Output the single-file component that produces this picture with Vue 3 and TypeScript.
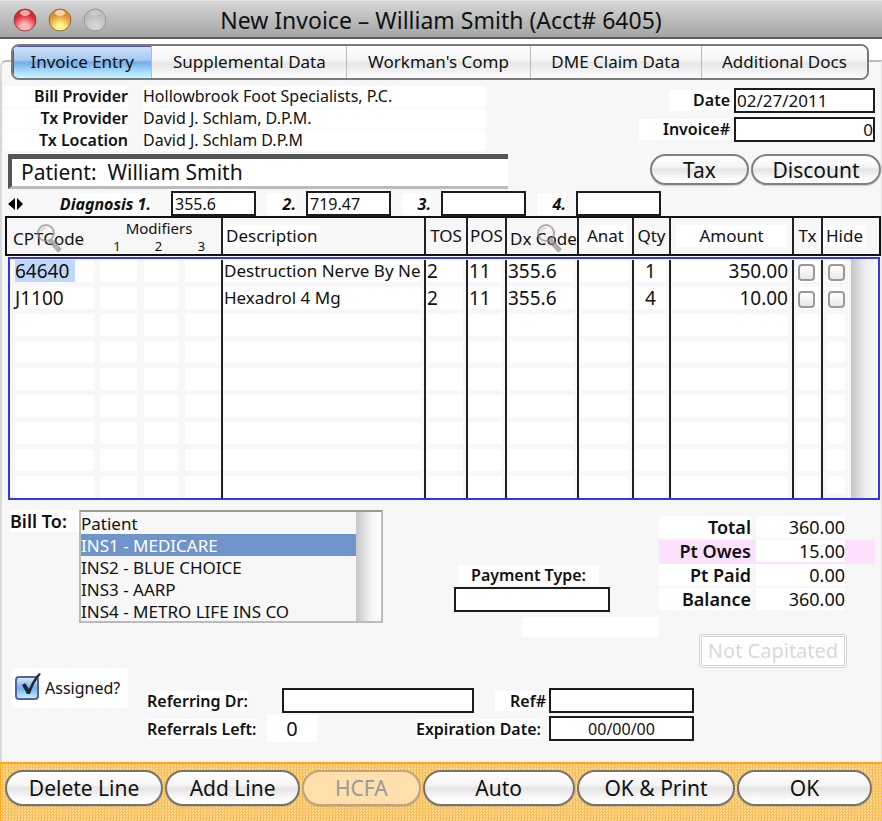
<script setup lang="ts">
import { ref } from 'vue'

interface Line {
  code: string
  desc: string
  tos: string
  pos: string
  dx: string
  anat: string
  qty: string
  amount: string
  tx: boolean
  hide: boolean
}

const tabs = ['Invoice Entry', 'Supplemental Data', "Workman's Comp", 'DME Claim Data', 'Additional Docs']
const activeTab = ref(0)

const providers = [
  { label: 'Bill Provider', value: 'Hollowbrook Foot Specialists, P.C.' },
  { label: 'Tx Provider', value: 'David J. Schlam, D.P.M.' },
  { label: 'Tx Location', value: 'David J. Schlam D.P.M' },
]

const date = ref('02/27/2011')
const invoiceNo = ref('0')
const diagnoses = ref(['355.6', '719.47', '', ''])

const lines = ref<Line[]>([
  { code: '64640', desc: 'Destruction Nerve By Ne', tos: '2', pos: '11', dx: '355.6', anat: '', qty: '1', amount: '350.00', tx: false, hide: false },
  { code: 'J1100', desc: 'Hexadrol 4 Mg', tos: '2', pos: '11', dx: '355.6', anat: '', qty: '4', amount: '10.00', tx: false, hide: false },
])
const emptyRows = 7

const payers = ['Patient', 'INS1 - MEDICARE', 'INS2 - BLUE CHOICE', 'INS3 - AARP', 'INS4 - METRO LIFE INS CO']
const billTo = ref('INS1 - MEDICARE')
const paymentType = ref('')
const totals = [
  { label: 'Total', value: '360.00', owed: false },
  { label: 'Pt Owes', value: '15.00', owed: true },
  { label: 'Pt Paid', value: '0.00', owed: false },
  { label: 'Balance', value: '360.00', owed: false },
]
const assigned = ref(true)
const referringDr = ref('')
const refNo = ref('')
const expiration = ref('00/00/00')
</script>

<template>
  <main class="window">
    <header class="titlebar">
      <div class="lights">
        <svg v-for="c in ['red', 'amber', 'grey']" :key="c" :class="['light', c]" viewBox="0 0 24 24" aria-hidden="true">
          <defs>
            <radialGradient :id="'orb-' + c" cx="0.5" cy="0.85" r="0.75">
              <stop class="inner" offset="0" />
              <stop class="inner" offset="0.25" />
              <stop class="outer" offset="0.8" />
            </radialGradient>
          </defs>
          <circle class="rim" cx="12" cy="12" r="11" :fill="`url(#orb-${c})`" />
          <ellipse class="shine" cx="12" cy="5" rx="5" ry="3" />
        </svg>
      </div>
      <h1>New Invoice – William Smith (Acct# 6405)</h1>
    </header>

    <nav class="tabs">
      <button v-for="(t, i) in tabs" :key="t" type="button" :class="{ active: i === activeTab }" @click="activeTab = i">{{ t }}</button>
    </nav>

    <div class="pane">
      <section class="top">
        <dl class="providers">
          <template v-for="p in providers" :key="p.label">
            <dt>{{ p.label }}</dt>
            <dd>{{ p.value }}</dd>
          </template>
        </dl>
        <div class="ids">
          <label for="date">Date</label>
          <input id="date" v-model="date" class="field" />
          <label for="inv">Invoice#</label>
          <input id="inv" v-model="invoiceNo" class="field right" />
        </div>
      </section>

      <section class="patient-row">
        <div class="patient">Patient:&nbsp; William Smith</div>
        <div class="pair">
          <button type="button" class="pill tax">Tax</button>
          <button type="button" class="pill disc">Discount</button>
        </div>
      </section>

      <section class="diagnosis">
        <svg class="arrows" viewBox="0 0 16 14" aria-hidden="true"><path d="M7 1v12L0 7zM9 1v12l6-6z" /></svg>
        <template v-for="(_, i) in diagnoses" :key="i">
          <label :for="'dx' + i" :class="{ first: i === 0 }"><span>{{ i === 0 ? 'Diagnosis 1.' : i + 1 + '.' }}</span></label>
          <input :id="'dx' + i" v-model="diagnoses[i]" class="field" />
        </template>
      </section>

      <table class="lines">
        <thead>
          <tr>
            <th class="code low">
              CPTCode
              <svg class="lens" viewBox="0 0 28 30" aria-hidden="true"><path class="handle" d="M15 17l10 11" /><circle cx="11" cy="10" r="8" /><path class="glint" d="M6 9q1-4 5-4" /></svg>
            </th>
            <th class="mods rule">
              <span class="title">Modifiers</span>
              <span class="nums"><i>1</i><i>2</i><i>3</i></span>
            </th>
            <th class="rule left"><span class="chip">Description</span></th>
            <th class="rule">TOS</th>
            <th class="rule">POS</th>
            <th class="rule low dxh">
              Dx Code
              <svg class="lens" viewBox="0 0 28 30" aria-hidden="true"><path class="handle" d="M15 17l10 11" /><circle cx="11" cy="10" r="8" /><path class="glint" d="M6 9q1-4 5-4" /></svg>
            </th>
            <th class="rule"><span class="chip">Anat</span></th>
            <th class="rule">Qty</th>
            <th class="rule"><span class="chip amt">Amount</span></th>
            <th class="rule">Tx</th>
            <th class="left"><span class="chip">Hide</span></th>
          </tr>
        </thead>
        <tbody>
          <tr v-for="(l, i) in lines" :key="l.code">
            <td class="code num"><span :class="{ selected: i === 0 }">{{ l.code }}</span></td>
            <td class="mod"></td>
            <td class="mod"></td>
            <td class="mod rule"></td>
            <td class="desc rule">{{ l.desc }}</td>
            <td class="rule num">{{ l.tos }}</td>
            <td class="rule num">{{ l.pos }}</td>
            <td class="rule num">{{ l.dx }}</td>
            <td class="rule">{{ l.anat }}</td>
            <td class="rule center num">{{ l.qty }}</td>
            <td class="rule amount num">{{ l.amount }}</td>
            <td class="rule tick"><input v-model="l.tx" type="checkbox" aria-label="Tx" /></td>
            <td class="tick"><input v-model="l.hide" type="checkbox" aria-label="Hide" /></td>
          </tr>
          <tr v-for="n in emptyRows" :key="n">
            <td class="code"></td>
            <td class="mod"></td>
            <td class="mod"></td>
            <td class="mod rule"></td>
            <td class="desc rule"></td>
            <td v-for="k in 5" :key="k" class="rule"></td>
            <td class="rule amount"></td>
            <td class="rule tick"></td>
            <td class="tick"></td>
          </tr>
        </tbody>
      </table>

      <section class="middle">
        <div class="bill">
          <label for="billto">Bill To:</label>
          <div class="list">
            <select id="billto" v-model="billTo" size="5">
              <option v-for="p in payers" :key="p">{{ p }}</option>
            </select>
            <div class="track"></div>
          </div>
        </div>
        <div class="payment">
          <label for="ptype">Payment Type:</label>
          <input id="ptype" v-model="paymentType" class="field" />
          <div class="note"></div>
        </div>
        <div class="sums">
          <dl>
            <div v-for="t in totals" :key="t.label" :class="{ owed: t.owed }">
              <dt>{{ t.label }}</dt>
              <dd>{{ t.value }}</dd>
            </div>
          </dl>
          <button type="button" class="capitated" disabled>Not Capitated</button>
        </div>
      </section>

      <section class="referral">
        <label class="assigned">
          <span class="box">
            <input v-model="assigned" type="checkbox" />
            <svg v-if="assigned" viewBox="0 0 26 28" aria-hidden="true"><path d="M6 13l3-2 4 6Q17 7 23 1l2 1Q18 10 14 22h-3z" /></svg>
          </span>
          <span>Assigned?</span>
        </label>
        <div class="refs">
          <label for="rdr"><span>Referring Dr:</span></label>
          <input id="rdr" v-model="referringDr" class="field wide" />
          <label for="rno" class="end"><span class="rno">Ref#</span></label>
          <input id="rno" v-model="refNo" class="field" />
          <div class="lbl"><span>Referrals Left:</span></div>
          <output>0</output>
          <label for="exp" class="end exp"><span>Expiration Date:</span></label>
          <input id="exp" v-model="expiration" class="field mid" />
        </div>
      </section>
    </div>

    <footer>
      <button type="button" class="pill a">Delete Line</button>
      <button type="button" class="pill b">Add Line</button>
      <button type="button" class="pill c" disabled>HCFA</button>
      <button type="button" class="pill d">Auto</button>
      <button type="button" class="pill a">OK &amp; Print</button>
      <button type="button" class="pill b">OK</button>
    </footer>
  </main>
</template>

<style>
body {
  margin: 0;
}
</style>

<style scoped>
* {
  box-sizing: border-box;
}
.window {
  min-height: 100vh;
  display: flex;
  flex-direction: column;
  background: #fff;
  color: #111;
  font: 17px/22px "Noto Sans", "Open Sans", sans-serif;
}
button,
input,
select {
  font: inherit;
  color: inherit;
  margin: 0;
}
dl,
dt,
dd {
  margin: 0;
}
.titlebar {
  height: 39px;
  display: grid;
  grid-template-columns: 1fr auto 1fr;
  align-items: center;
  padding-top: 2px;
  background: linear-gradient(#d6d6d6, #a4a4a4);
  border-top: 1px solid #e4e4e4;
  border-bottom: 2px solid #5c5c5c;
}
h1 {
  margin: 0;
  font-size: 23px;
  line-height: 26px;
  font-weight: 400;
}
.lights {
  display: flex;
  gap: 11px;
  padding-left: 13px;
}
.light {
  width: 24px;
  height: 24px;
}
.red .rim { stroke: #8c4a4a; }
.red .inner { stop-color: #ffb4b4; }
.red .outer { stop-color: #da2730; }
.amber .rim { stroke: #96703a; }
.amber .inner { stop-color: #fff08a; }
.amber .outer { stop-color: #e09036; }
.grey .rim { stroke: #989898; }
.grey .inner { stop-color: #d4d4d4; }
.grey .outer { stop-color: #bcbcbc; }
.shine { fill: #fff; opacity: 0.6; }
.grey .shine { opacity: 0.2; }

.tabs {
  position: relative;
  z-index: 1;
  display: flex;
  height: 36px;
  margin: 5px 13px 0 11px;
  border: 2px solid #7a7a7a;
  border-radius: 8px;
  overflow: hidden;
}
.tabs button {
  flex: 1 1 auto;
  padding: 0;
  border: 0;
  border-right: 1px solid #bbb;
  background: linear-gradient(#fff, #f3f3f3 48%, #e6e6e6 50%, #fafafa);
}
.tabs button:nth-child(1) { flex: 139 1 0; }
.tabs button:nth-child(2) { flex: 195 1 0; }
.tabs button:nth-child(3) { flex: 183 1 0; }
.tabs button:nth-child(4) { flex: 171 1 0; }
.tabs button:nth-child(5) { flex: 166 1 0; border-right: 0; }
.tabs .active {
  background: linear-gradient(#d3e4f8, #a3c8f0 45%, #72abe8 50%, #a9dcfb 80%, #c6f6ff);
  box-shadow: inset 1px 1px 0 #4a55b5;
}

.pane {
  flex: 1;
  margin-top: -20px;
  padding-top: 24px;
  border-top: 2px solid #bbb;
  border-left: 2px solid #d8d8d8;
  border-right: 1px solid #e4e4e4;
  border-top-left-radius: 6px;
  background: #f7f7f7;
}
.top {
  display: flex;
  justify-content: space-between;
  padding: 0 6px 0 1px;
}
.providers {
  display: grid;
  grid-template-columns: 125px 343px;
  gap: 1px 15px;
  font-size: 16px;
  line-height: 21px;
}
.providers dt,
.providers dd {
  background: #fff;
}
.providers dt {
  font-weight: 600;
  text-align: right;
}
.ids {
  display: grid;
  grid-template-columns: auto 141px;
  align-content: start;
  align-items: center;
  justify-items: end;
  gap: 4px;
  padding-top: 2px;
  font-size: 16px;
}
.ids label {
  padding-left: 24px;
  background: #fff;
  font-weight: 600;
  line-height: 21px;
}
.field {
  width: 100%;
  height: 25px;
  min-width: 0;
  padding: 0 2px;
  border: 2px solid #1c1c1c;
  border-radius: 0;
  outline: 0;
  background: #fff;
  font-size: 16px;
  line-height: 21px;
}
.ids .field { font-size: 17px; padding: 0 1px; }
.ids .right { text-align: right; padding: 0; }
.mid { text-align: center; }

.patient-row {
  display: flex;
  justify-content: space-between;
  align-items: flex-start;
  margin-top: 3px;
  padding-left: 6px;
}
.patient {
  flex: 0 1 500px;
  height: 35px;
  padding-left: 9px;
  border-top: 5px solid #555;
  border-left: 4px solid #555;
  border-bottom: 3px solid #bbb;
  background: #fff;
  font-size: 21px;
  line-height: 26px;
}
.pill {
  height: 31px;
  padding: 0;
  border: 2px solid #808080;
  border-radius: 18px;
  background: linear-gradient(#fff, #f6f6f6 40%, #e4e4e4 50%, #fff 90%);
  box-shadow: 0 1px 1px #9997;
  font-size: 21px;
  line-height: 24px;
}
.pair {
  display: flex;
  gap: 2px;
}
.tax { width: 99px; }
.disc { width: 130px; }

.diagnosis {
  display: grid;
  grid-template-columns: 16px 147px repeat(3, 85px 50px) 85px;
  margin-top: 2px;
  padding-left: 6px;
  align-items: center;
  font-size: 16px;
}
.arrows {
  width: 16px;
  height: 14px;
}
.diagnosis label {
  padding-right: 10px;
  text-align: right;
  font-style: italic;
  font-weight: 700;
}
.diagnosis .first { padding-right: 20px; }
.diagnosis span {
  display: inline-block;
  padding-left: 16px;
  background: #fff;
}
.diagnosis .first span { padding-left: 0; }

.lines {
  display: grid;
  grid-template-columns: 92px 44px 41px 41px minmax(0, 1fr) 42px 39px 72px 55px 37px 123px 29px 58px;
  margin: 0 0 0 3px;
}
thead,
tbody,
tr {
  display: grid;
  grid-column: 1 / -1;
  grid-template-columns: subgrid;
}
thead {
  border: 2px solid #111;
}
th {
  height: 36px;
  padding: 0;
  font-weight: 400;
  line-height: 36px;
  white-space: nowrap;
}
.rule {
  border-right: 2px solid #222;
}
.left { text-align: left; }
th.low {
  position: relative;
  line-height: 42px;
  text-align: left;
  padding-left: 6px;
}
th.dxh { padding-left: 3px; }
.chip {
  display: inline-block;
  padding: 0 3px;
  background: #fff;
  line-height: 22px;
}
.amt { padding: 0 23px; }
.lens {
  position: absolute;
  left: 28px;
  top: 5px;
  width: 28px;
  height: 30px;
  fill: none;
  stroke: #8f8f8f;
  stroke-width: 2;
  opacity: 0.7;
}
.handle { stroke-width: 5; }
.glint { stroke: #ccc; }
.mods {
  grid-column: span 3;
}
.mods .title {
  display: block;
  font-size: 15px;
  line-height: 20px;
}
.mods .nums {
  display: grid;
  grid-template-columns: 40px 43px 43px;
  font-size: 13px;
  line-height: 16px;
}
.mods i { font-style: normal; }
tbody {
  margin: 1px 1px 0 3px;
  padding-top: 1px;
  border: 2px solid #3636e8;
  background: linear-gradient(90deg, #c4c4c4, #ececec 50%, #fafafa) right / 27px 100% no-repeat;
}
td {
  height: 27px;
  min-width: 0;
  padding: 0 3px 5px 1px;
  background: #fff content-box;
  line-height: 22px;
  white-space: nowrap;
}
td.num { font-size: 19px; }
td.code { padding: 0 3px 5px 5px; }
td.mod { padding: 0 4px 5px 3px; }
td.mod.rule { padding-right: 0; }
td.center { text-align: center; }
td.amount { padding-right: 4px; text-align: right; }
.selected {
  display: inline-block;
  width: 60px;
  background: #bfd8fa;
}
td.tick {
  padding: 0 2px 5px 3px;
  line-height: 0;
}
td.tick:last-child {
  padding: 0 33px 5px 4px;
}
.tick input {
  appearance: none;
  width: 17px;
  height: 17px;
  margin: 4px 0 0 1px;
  border: 2px solid #999;
  border-radius: 4px;
  background: linear-gradient(#fff, #e8e8e8);
}
tr:last-child td { height: 22px; padding-bottom: 0; }

.middle {
  display: flex;
  padding: 10px 6px 0 8px;
}
.bill {
  display: flex;
  align-items: flex-start;
}
.bill label {
  width: 69px;
  background: #fff;
  font-size: 18px;
  font-weight: 600;
}
.list {
  display: flex;
  width: 304px;
  height: 113px;
  border: 2px solid #bbb;
  border-top-color: #999;
}
.list select {
  flex: 1;
  appearance: none;
  height: 109px;
  padding: 0;
  border: 0;
  border-radius: 0;
  outline: 0;
  background: transparent;
  overflow: hidden;
}
option {
  height: 22px;
  min-height: 22px;
  padding: 0;
  color: #111;
  font-size: 17px;
  line-height: 22px;
}
option:checked {
  background: #6f94c9 linear-gradient(#6f94c9, #6f94c9);
  color: #fff;
}
.track {
  width: 25px;
  background: linear-gradient(90deg, #c6c6c6, #f4f4f4 60%, #fff);
}
.payment {
  width: 205px;
  margin-left: 71px;
  padding-top: 55px;
  font-size: 16px;
}
.payment label {
  display: block;
  width: 141px;
  margin: 0 0 2px 4px;
  background: #fff;
  font-weight: 600;
  line-height: 20px;
  text-align: center;
}
.payment .field { width: 156px; display: block; }
.note {
  height: 20px;
  margin: 5px 0 0 68px;
  background: #fff;
}
.sums {
  width: 216px;
  margin-left: auto;
  padding-top: 6px;
}
.sums dl > div {
  display: grid;
  grid-template-columns: 92px 89px;
  gap: 5px;
  height: 24px;
  font-size: 18px;
  line-height: 22px;
}
.sums dt { font-weight: 600; }
.sums dt,
.sums dd {
  text-align: right;
  height: 22px;
  background: #fff;
}
.sums .owed { background: #fde0fd; }
.sums .owed dt { background: transparent; }
.capitated {
  display: block;
  width: 148px;
  height: 34px;
  margin: 22px 0 0 40px;
  padding: 0;
  border: 3px double #d4d4d4;
  border-radius: 3px;
  background: #fff;
  color: #d9d9d9;
  font-size: 20px;
  line-height: 26px;
}

.referral {
  display: flex;
  align-items: flex-start;
  padding-left: 10px;
  font-size: 16px;
}
.assigned {
  display: flex;
  align-items: center;
  gap: 6px;
  width: 116px;
  height: 40px;
  padding-left: 3px;
  background: #fff;
}
.box { position: relative; }
.box input {
  display: block;
  appearance: none;
  width: 24px;
  height: 24px;
  border: 2px solid #5560a8;
  border-radius: 4px;
  background: linear-gradient(#d6e6f8, #74aeea 50%, #c0f0ff);
}
.box svg {
  position: absolute;
  left: 1px;
  top: -4px;
  width: 26px;
  height: 28px;
  fill: #222a38;
}
.refs {
  display: grid;
  grid-template-columns: 120px 15px 192px 75px 145px;
  gap: 2px 0;
  align-items: center;
  margin: 20px 0 0 19px;
}
.refs label,
.refs .lbl {
  font-weight: 600;
  line-height: 20px;
}
.refs span {
  display: inline-block;
  background: #fff;
}
.refs .rno { padding-left: 15px; }
.refs .wide { grid-column: 2 / 4; margin-left: 15px; width: auto; }
.refs .end { text-align: right; padding-right: 3px; }
.refs output {
  width: 50px;
  height: 27px;
  background: #fff;
  font-size: 20px;
  line-height: 27px;
  text-align: center;
}
.refs .exp { grid-column: 3 / 5; padding-right: 8px; }

footer {
  display: flex;
  gap: 2px;
  height: 59px;
  padding: 6px 10px 0 4px;
  border-top: 2px solid #ffa51f;
  border-left: 1px solid #ffa51f;
  background: repeating-conic-gradient(#ffb84a 0 25%, #ffdca0 0 50%) 0 0 / 3px 3px;
}
footer .pill {
  height: 36px;
  flex: 159 1 0;
  border-color: #77746c;
}
footer .b { flex-grow: 135; }
footer .c { flex-grow: 118; }
footer .d { flex-grow: 153; }
footer .pill:disabled {
  border-color: #bfa579;
  background: #ffdfac;
  color: #999;
}
</style>
